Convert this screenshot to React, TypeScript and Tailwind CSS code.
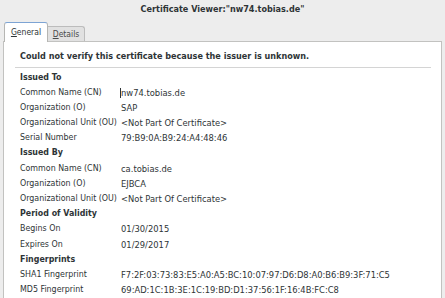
import React from 'react';

type Row = { label: string; value: string; caret?: boolean };

const sections: { title: string; rows: Row[] }[] = [
  {
    title: 'Issued To',
    rows: [
      { label: 'Common Name (CN)', value: 'nw74.tobias.de', caret: true },
      { label: 'Organization (O)', value: 'SAP' },
      { label: 'Organizational Unit (OU)', value: '<Not Part Of Certificate>' },
      { label: 'Serial Number', value: '79:B9:0A:B9:24:A4:48:46' },
    ],
  },
  {
    title: 'Issued By',
    rows: [
      { label: 'Common Name (CN)', value: 'ca.tobias.de' },
      { label: 'Organization (O)', value: 'EJBCA' },
      { label: 'Organizational Unit (OU)', value: '<Not Part Of Certificate>' },
    ],
  },
  {
    title: 'Period of Validity',
    rows: [
      { label: 'Begins On', value: '01/30/2015' },
      { label: 'Expires On', value: '01/29/2017' },
    ],
  },
  {
    title: 'Fingerprints',
    rows: [
      { label: 'SHA1 Fingerprint', value: 'F7:2F:03:73:83:E5:A0:A5:BC:10:07:97:D6:D8:A0:B6:B9:3F:71:C5' },
      { label: 'MD5 Fingerprint', value: '69:AD:1C:1B:3E:1C:19:BD:D1:37:56:1F:16:4B:FC:C8' },
    ],
  },
];

const App: React.FC = () => {
  return (
    <div
      className="w-[445px] h-[298px] bg-[#ededed] text-[#2e3436] flex flex-col overflow-hidden"
      style={{ fontFamily: '"DejaVu Sans Condensed", "DejaVu Sans", sans-serif' }}
    >
      {/* Title bar */}
      <div className="h-[17px] flex items-center justify-center text-[9px] font-bold pt-[2px]">
        Certificate Viewer:"nw74.tobias.de"
      </div>

      {/* Tabs */}
      <div className="h-[24px] flex items-end pl-[4px] text-[8.5px]">
        <div className="relative z-10 w-[44px] h-[20px] -mb-px bg-white border border-[#b6b6b3] border-b-0 border-t-[#7da4d4] rounded-t-[3px] flex items-center justify-center">
          <span><span className="underline">G</span>eneral</span>
        </div>
        <div className="w-[37px] h-[15px] bg-[#e1e1e1] border border-[#bcbcbc] border-b-0 border-l-0 rounded-tr-[3px] flex items-center justify-center text-[#4a4a4a]">
          <span><span className="underline">D</span>etails</span>
        </div>
      </div>

      {/* Panel */}
      <div className="flex-1 mx-[3px] bg-white border border-[#c2c2c0] border-b-0">
        <div className="px-[11px]">
          <div className="h-[25px] flex items-center pl-[5px] pt-[4px] text-[9px] font-bold">
            Could not verify this certificate because the issuer is unknown.
          </div>
          <div className="h-px bg-[#d4d4d4] mr-[-1px]" />
        </div>
        <div className="pl-[16px] pt-[1.5px] text-[8.8px]">
          {sections.map((s) => (
            <div key={s.title}>
              <div className="h-[15.2px] leading-[15.2px] font-bold">{s.title}</div>
              {s.rows.map((r, i) => (
                <div key={i} className="h-[15.2px] leading-[15.2px] flex">
                  <div className="w-[101px] shrink-0 whitespace-nowrap">{r.label}</div>
                  <div className="relative whitespace-nowrap text-[9.3px]">
                    {r.caret && (
                      <span className="absolute left-[-1px] top-[3px] w-px h-[10px] bg-[#2e3436]" />
                    )}
                    {r.value}
                  </div>
                </div>
              ))}
            </div>
          ))}
        </div>
      </div>
    </div>
  );
};

export default App;
